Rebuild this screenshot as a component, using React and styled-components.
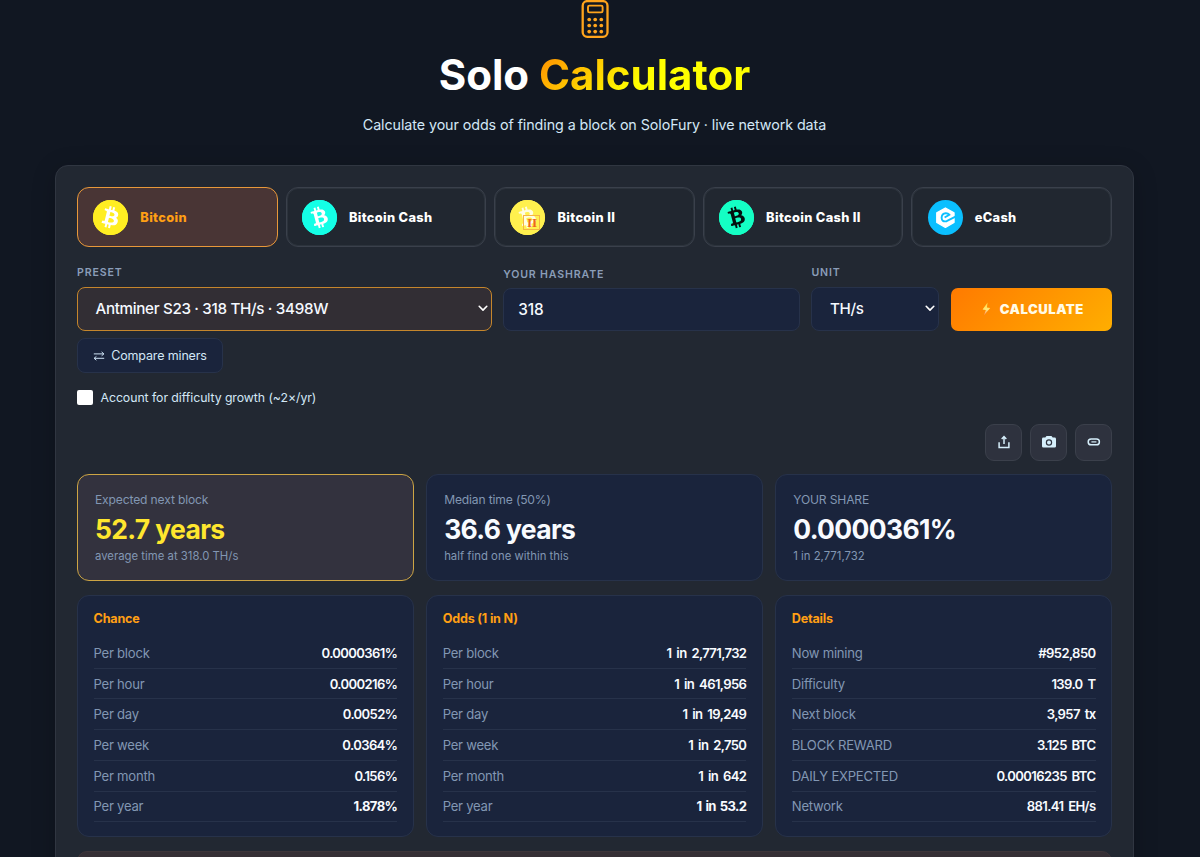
import React from 'react';
import styled, { createGlobalStyle, css } from 'styled-components';
import { SiBitcoin, SiBitcoincash } from 'react-icons/si';

const chance = [
  ['Per block', '0.0000361%'],
  ['Per hour', '0.000216%'],
  ['Per day', '0.0052%'],
  ['Per week', '0.0364%'],
  ['Per month', '0.156%'],
  ['Per year', '1.878%', true],
];

const odds = [
  ['Per block', '1 in 2,771,732'],
  ['Per hour', '1 in 461,956'],
  ['Per day', '1 in 19,249'],
  ['Per week', '1 in 2,750'],
  ['Per month', '1 in 642'],
  ['Per year', '1 in 53.2', true],
];

const details = [
  ['Now mining', '#952,850'],
  ['Difficulty', '139.0 T'],
  ['Next block', '3,957 tx'],
  ['BLOCK REWARD', '3.125 BTC'],
  ['DAILY EXPECTED', '0.00016235 BTC'],
  ['Network', '881.41 EH/s'],
];

function CalculatorIcon() {
  return (
    <svg width="28" height="40" viewBox="0 0 28 40" fill="none" stroke="#ffa41c">
      <rect x="1.7" y="1.1" width="24.8" height="35.8" rx="4.6" strokeWidth="2.3" />
      <rect x="7" y="5.6" width="14.6" height="6.8" rx="1.4" strokeWidth="1.9" />
      <g fill="#ffa41c" stroke="none">
        {[19.5, 25.5, 31.6].map((y) =>
          [8.2, 14.2, 20.3].map((x) => <circle key={`${x}-${y}`} cx={x} cy={y} r="1.85" />)
        )}
      </g>
    </svg>
  );
}

function BitcoinTwoLogo() {
  return (
    <>
      <SiBitcoincash size={35} />
      <Roman>II</Roman>
    </>
  );
}

function ECashLogo() {
  return (
    <svg width="35" height="35" viewBox="0 0 35 35" fill="none">
      <path d="M17.4 8 26 12.8V22.5L17.4 27.3 8.8 22.5V12.8Z" fill="#fff" stroke="#fff" strokeWidth="1.4" strokeLinejoin="round" />
      <path d="M28 16.4 18.7 21.2Q13.7 22.3 13.6 17.8 13.8 13.6 17.7 13.3 20 13.2 21.3 14.7L16.6 17.5" stroke="#0abfff" strokeWidth="1.9" />
    </svg>
  );
}

function Chevron() {
  return (
    <svg width="10" height="7" viewBox="0 0 10 7" fill="none" stroke="#fff" strokeWidth="1.6" strokeLinecap="round" strokeLinejoin="round">
      <path d="M1.2 1.3 5 5.1 8.8 1.3" />
    </svg>
  );
}

function Bolt() {
  return (
    <svg width="10" height="14" viewBox="0 0 10 14">
      <defs>
        <linearGradient id="bolt" x1="0" y1="0" x2="0" y2="1">
          <stop offset="0" stopColor="#ffd43a" />
          <stop offset="0.55" stopColor="#ffe97a" />
          <stop offset="1" stopColor="#ff8a70" />
        </linearGradient>
      </defs>
      <path d="M6.6.6 1.6 7.4 4.8 8 3 13.2 9.2 6 5.9 5.4Z" fill="url(#bolt)" />
    </svg>
  );
}

function SwapIcon() {
  return (
    <svg width="12" height="10" viewBox="0 0 12 10" fill="none" stroke="#cfe3f5" strokeWidth="1" strokeLinejoin="round">
      <path d="M.8 2.9H10.8M8.6.9 10.9 2.9 8.6 4.8M11.2 7.3H1.2M3.4 5.4 1.1 7.3 3.4 9.2" />
    </svg>
  );
}

function UploadIcon() {
  return (
    <svg width="12" height="14" viewBox="0 0 12 14" fill="none" stroke="#d6effb" strokeWidth="1.5">
      <path d="M1.1 7.2V12.4H10.9V7.2M6 9V2M3.7 4 6 1.6 8.3 4" />
    </svg>
  );
}

function CameraIcon() {
  return (
    <svg width="16" height="14" viewBox="0 0 16 14">
      <path fillRule="evenodd" fill="#d6effb" d="M5.5 1H10.5L11.7 2.5H13.6Q15 2.5 15 3.9V11.2Q15 12.6 13.6 12.6H2.4Q1 12.6 1 11.2V3.9Q1 2.5 2.4 2.5H4.3ZM8 4.3A3.2 3.2 0 1 0 8 10.7 3.2 3.2 0 1 0 8 4.3ZM8 5.5A2 2 0 1 1 8 9.5 2 2 0 1 1 8 5.5Z" />
    </svg>
  );
}

function LinkIcon() {
  return (
    <svg width="14" height="8" viewBox="0 0 14 8" fill="none" stroke="#d6effb" strokeWidth="1.5">
      <rect x="1.2" y="1" width="11.2" height="5.8" rx="2.9" />
      <path d="M4.4 3.9H9.4" strokeWidth="1.2" />
    </svg>
  );
}

function Coin({ name, color, glyph, active, children }) {
  return (
    <CoinButton $active={active}>
      <CoinLogo $color={color} $glyph={glyph}>{children}</CoinLogo>
      {name}
    </CoinButton>
  );
}

function Stat({ label, value, note, highlight }) {
  return (
    <StatCard $highlight={highlight}>
      <StatLabel>{label}</StatLabel>
      <StatValue $highlight={highlight}>{value}</StatValue>
      <StatNote>{note}</StatNote>
    </StatCard>
  );
}

function Table({ title, rows }) {
  return (
    <Panel>
      <PanelTitle>{title}</PanelTitle>
      {rows.map(([label, value, strong]) => (
        <Row key={label}>
          <RowLabel>{label}</RowLabel>
          <RowValue $strong={strong}>{value}</RowValue>
        </Row>
      ))}
    </Panel>
  );
}

function App() {
  return (
    <Page>
      <GlobalStyle />
      <Header>
        <CalculatorIcon />
        <Title>Solo <span>Calculator</span></Title>
        <Subtitle>Calculate your odds of finding a block on SoloFury · live network data</Subtitle>
      </Header>
      <Card>
        <Coins>
          <Coin name="Bitcoin" color="#ffee22" glyph="#fff" active><SiBitcoin size={35} /></Coin>
          <Coin name="Bitcoin Cash" color="#14ffe6" glyph="#fff"><SiBitcoincash size={35} /></Coin>
          <Coin name="Bitcoin II" color="#fff04e" glyph="#fffde0"><BitcoinTwoLogo /></Coin>
          <Coin name="Bitcoin Cash II" color="#14ffc4" glyph="#04110f"><SiBitcoincash size={35} /></Coin>
          <Coin name="eCash" color="#0abfff" glyph="#0abfff"><ECashLogo /></Coin>
        </Coins>
        <Form>
          <Field>
            <Label>Preset</Label>
            <Select $active>Antminer S23 · 318 TH/s · 3498W<Chevron /></Select>
          </Field>
          <Field>
            <Label $tight>Your hashrate</Label>
            <Input>318</Input>
          </Field>
          <Field>
            <Label>Unit</Label>
            <Select>TH/s<Chevron /></Select>
          </Field>
          <Calculate><Bolt />Calculate</Calculate>
        </Form>
        <Compare><SwapIcon />Compare miners</Compare>
        <Growth><Box />Account for difficulty growth (~2×/yr)</Growth>
        <Actions>
          <IconButton><UploadIcon /></IconButton>
          <IconButton><CameraIcon /></IconButton>
          <IconButton><LinkIcon /></IconButton>
        </Actions>
        <Grid>
          <Stat label="Expected next block" value="52.7 years" note="average time at 318.0 TH/s" highlight />
          <Stat label="Median time (50%)" value="36.6 years" note="half find one within this" />
          <Stat label="YOUR SHARE" value="0.0000361%" note="1 in 2,771,732" />
        </Grid>
        <Grid>
          <Table title="Chance" rows={chance} />
          <Table title="Odds (1 in N)" rows={odds} />
          <Table title="Details" rows={details} />
        </Grid>
        <Banner />
      </Card>
    </Page>
  );
}

export default App;

const GlobalStyle = createGlobalStyle`
* { box-sizing:border-box; }
body {
margin:0;
background:#111722;
color:#fff;
font-family:Inter, "Liberation Sans", sans-serif;
overflow:hidden;
}
button { font-family:inherit; color:inherit; }
`

const Page=styled.div`
width:1189px;
height:857px;
overflow:hidden;
display:flex;
flex-direction:column;
align-items:center;
`

const Header=styled.header`
display:flex;
flex-direction:column;
align-items:center;
height:165px;
flex-shrink:0;
> svg { flex-shrink:0; }
`

const Title=styled.h1`
margin:8px 0 0;
font-size:42px;
line-height:54px;
font-weight:700;
span {
background:linear-gradient(135deg, #ff8a00 0%, #ffff00 50%);
-webkit-background-clip:text;
background-clip:text;
color:transparent;
}
`

const Subtitle=styled.p`
margin:12px 0 0;
font-size:14.3px;
line-height:22px;
letter-spacing:-0.08px;
color:#d3e7f6;
`

const Card=styled.main`
width:1079px;
height:760px;
flex-shrink:0;
padding:21px;
border:1px solid #303641;
border-radius:13px;
background:#222832;
box-shadow:0 4px 24px rgba(0,0,0,0.2);
display:flex;
flex-direction:column;
> * { flex-shrink:0; }
`

const Coins=styled.div`
display:grid;
grid-template-columns:repeat(5, 1fr);
gap:8px;
`

const CoinButton=styled.button`
height:60px;
padding:0 15.3px;
border:1px solid #3a404b;
border-radius:12px;
background:#212730;
box-shadow:inset 0 0 0 1px rgba(90,98,112,0.2);
display:flex;
align-items:center;
gap:12px;
font-size:12.8px;
font-weight:800;
letter-spacing:0.34px;
color:#fff;
${props => props.$active && css`
border-color:#e8983a;
background:#493535;
box-shadow:none;
color:#ff9f14;
`}
`

const CoinLogo=styled.span`
position:relative;
width:35px;
height:35px;
border-radius:50%;
color:${props => props.$color};
background:radial-gradient(circle, ${props => props.$glyph} 58%, ${props => props.$color} 60%);
svg { display:block; }
`

const Roman=styled.span`
position:absolute;
right:5px;
bottom:5px;
width:17px;
height:15px;
border:1px solid #f5b544;
font:700 13px/13px "Liberation Serif", serif;
text-align:center;
letter-spacing:0;
color:#ee6420;
`

const Form=styled.div`
display:grid;
grid-template-columns:414.5px 296.5px 127.5px 1fr;
column-gap:11.7px;
align-items:end;
margin-top:18px;
`

const Field=styled.div`
display:flex;
flex-direction:column;
`

const Label=styled.label`
font-size:10.6px;
line-height:16px;
margin-bottom:${props => (props.$tight ? '5.5px' : '6px')};
font-weight:600;
letter-spacing:0.85px;
text-transform:uppercase;
color:#8a9db8;
`

const Input=styled.div`
height:42.5px;
padding:0 14px;
border:1px solid #27324a;
border-radius:8px;
background:#1a243c;
display:flex;
align-items:center;
font-size:15.4px;
font-weight:500;
letter-spacing:-0.1px;
color:#f5f9ff;
`

const Select=styled(Input)`
height:43.5px;
padding:0 3px 0 17.5px;
justify-content:space-between;
font-size:15.2px;
letter-spacing:-0.33px;
${props => props.$active && css`
border-color:#c5862c;
background:#322e34;
`}
`

const Calculate=styled.button`
height:42.5px;
border:0;
border-radius:7px;
padding:0 0 0 2px;
background:linear-gradient(135deg, #ff7a00, #ffae00);
display:flex;
align-items:center;
justify-content:center;
gap:9px;
font-size:13.1px;
font-weight:900;
letter-spacing:0.5px;
text-transform:uppercase;
color:#fffbe8;
`

const Compare=styled.button`
align-self:flex-start;
height:35px;
width:146px;
margin-top:7.5px;
padding:0;
border:1px solid #27324a;
border-radius:8px;
background:#1a243c;
display:flex;
align-items:center;
justify-content:center;
gap:6px;
font-size:12.5px;
letter-spacing:-0.15px;
color:#d3e7f6;
`

const Growth=styled.label`
display:flex;
align-items:center;
gap:8px;
height:20px;
margin-top:14.5px;
font-size:12.3px;
letter-spacing:-0.06px;
color:#d3e7f6;
`

const Box=styled.span`
width:15.5px;
height:15.5px;
border-radius:2px;
background:#fff;
`

const Actions=styled.div`
display:flex;
justify-content:flex-end;
gap:8px;
margin-top:16px;
`

const IconButton=styled.button`
width:37px;
height:37px;
padding:0;
border:1px solid #3b404b;
border-radius:9px;
background:#2e323e;
display:flex;
align-items:center;
justify-content:center;
`

const Grid=styled.div`
display:grid;
grid-template-columns:repeat(3, 1fr);
gap:12.4px;
margin-top:13.8px;
`

const StatCard=styled.section`
height:107px;
padding:14.5px 17px;
border:1px solid #27324a;
border-radius:12px;
background:#1a243c;
${props => props.$highlight && css`
border-color:#cda544;
background:#33323e;
`}
`

const StatLabel=styled.div`
font-size:12.1px;
line-height:20px;
letter-spacing:-0.15px;
color:#8297b3;
`

const StatValue=styled.div`
font-size:26.5px;
line-height:38px;
font-weight:700;
letter-spacing:-0.65px;
color:${props => (props.$highlight ? '#ffe62e' : '#f8fbff')};
`

const StatNote=styled.div`
font-size:11.35px;
line-height:17px;
color:#8297b3;
`

const Panel=styled.section`
height:242px;
padding:13px 15.5px;
border:1px solid #27324a;
border-radius:12px;
background:#1a243c;
`

const PanelTitle=styled.h2`
margin:0 0 9px;
font-size:12.6px;
line-height:20px;
font-weight:700;
letter-spacing:-0.19px;
color:#ff9f14;
`

const Row=styled.div`
height:30.7px;
border-bottom:1px solid #27324a;
display:flex;
align-items:center;
justify-content:space-between;
font-size:13.1px;
`

const RowLabel=styled.span`
letter-spacing:-0.24px;
color:#8297b3;
`

const RowValue=styled.span`
font-weight:${props => (props.$strong ? 700 : 600)};
letter-spacing:-0.63px;
word-spacing:${props => (props.$strong ? '1.4px' : '2.2px')};
color:#f8fbff;
`

const Banner=styled.div`
flex-shrink:0;
height:60px;
margin-top:13.5px;
border:1px solid #3d3539;
border-radius:10px;
background:#352f35;
`
